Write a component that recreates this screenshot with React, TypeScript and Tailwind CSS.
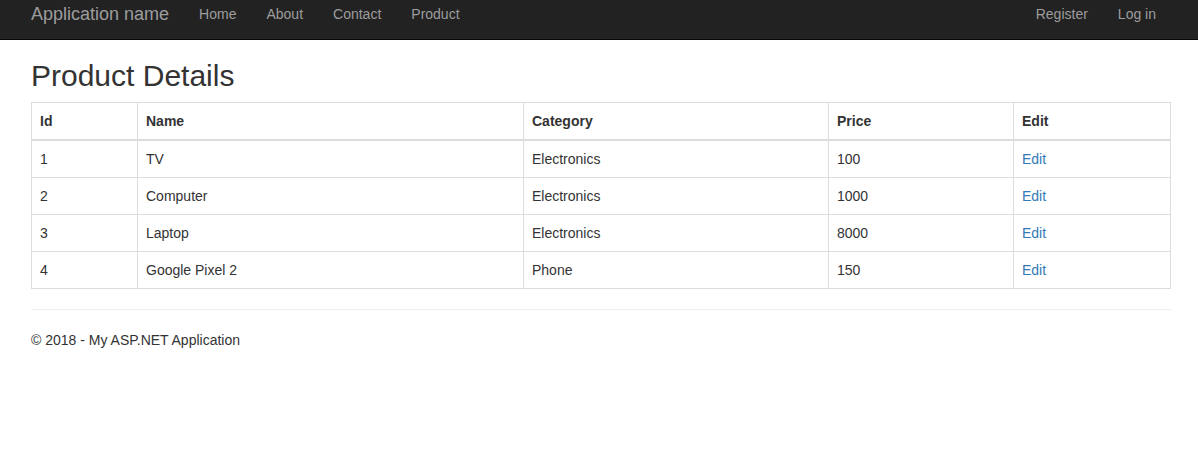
// ASP.NET 기본 템플릿 — Product Details 페이지
const LEFT_NAV = ["Home", "About", "Contact", "Product"]
const RIGHT_NAV = ["Register", "Log in"]

interface Product {
  id: number
  name: string
  category: string
  price: number
}

const PRODUCTS: Product[] = [
  { id: 1, name: "TV", category: "Electronics", price: 100 },
  { id: 2, name: "Computer", category: "Electronics", price: 1000 },
  { id: 3, name: "Laptop", category: "Electronics", price: 8000 },
  { id: 4, name: "Google Pixel 2", category: "Phone", price: 150 },
]

const FONT = { fontFamily: '"Liberation Sans", Arial, Helvetica, sans-serif' }

export default function App() {
  const cell = "border border-[#ddd] px-2 py-2 leading-5 align-top"

  return (
    <div className="min-h-[461px] bg-white text-[14px] text-[#333]" style={FONT}>
      {/* ── navbar (위쪽 일부 잘림) ───────────────────────────── */}
      <nav className="h-[40px] bg-[#222] border-b border-[#080808]">
        <div className="w-[1140px] ml-[31px] flex justify-between">
          <div className="flex">
            <span className="pt-[4px] pr-[15px] text-[18px] leading-5 text-[#9d9d9d]">Application name</span>
            {LEFT_NAV.map((l) => (
              <a key={l} className="pt-[4px] px-[15px] leading-5 text-[#9d9d9d]">{l}</a>
            ))}
          </div>
          <div className="flex">
            {RIGHT_NAV.map((l) => (
              <a key={l} className="pt-[4px] px-[15px] leading-5 text-[#9d9d9d]">{l}</a>
            ))}
          </div>
        </div>
      </nav>

      {/* ── body ──────────────────────────────────────────────── */}
      <div className="w-[1140px] ml-[31px]">
        <h2 className="mt-[19px] mb-[10px] text-[30px] leading-[33px] font-normal">Product Details</h2>

        <table className="w-full border-collapse border border-[#ddd]">
          <colgroup>
            <col className="w-[106px]" />
            <col className="w-[386px]" />
            <col className="w-[305px]" />
            <col className="w-[185px]" />
            <col />
          </colgroup>
          <thead>
            <tr>
              {["Id", "Name", "Category", "Price", "Edit"].map((h) => (
                <th key={h} className={`${cell} text-left font-bold border-b-2`}>{h}</th>
              ))}
            </tr>
          </thead>
          <tbody>
            {PRODUCTS.map((p) => (
              <tr key={p.id}>
                <td className={cell}>{p.id}</td>
                <td className={cell}>{p.name}</td>
                <td className={cell}>{p.category}</td>
                <td className={cell}>{p.price}</td>
                <td className={cell}><a className="text-[#337ab7]">Edit</a></td>
              </tr>
            ))}
          </tbody>
        </table>

        <hr className="mt-5 mb-5 border-0 border-t border-[#eee]" />
        <footer>
          <p className="leading-5">© 2018 - My ASP.NET Application</p>
        </footer>
      </div>
    </div>
  )
}
